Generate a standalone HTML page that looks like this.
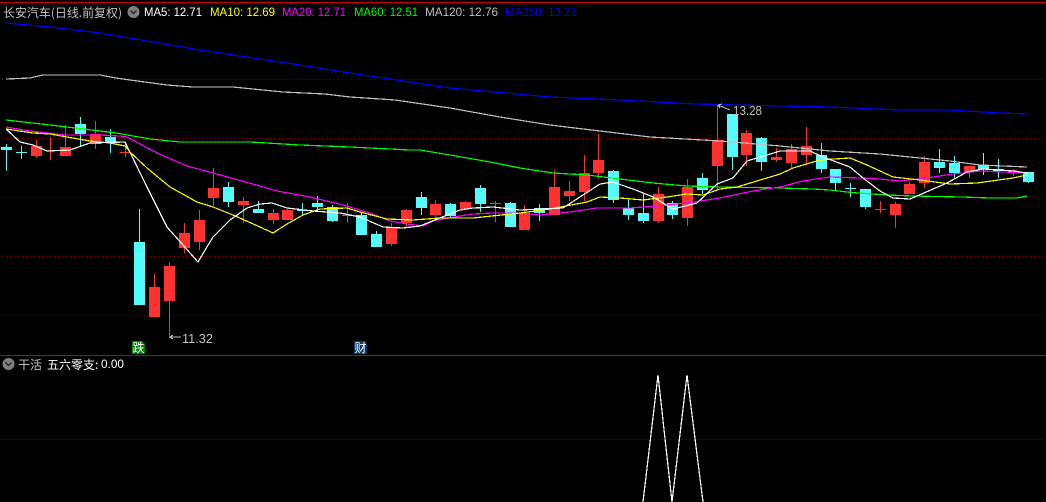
<!DOCTYPE html>
<html><head><meta charset="utf-8"><style>
html,body{margin:0;padding:0;background:#000;width:1046px;height:502px;overflow:hidden}
svg{display:block}
text{font-family:"Liberation Sans","WenQuanYi Zen Hei","Noto Sans CJK SC",sans-serif;font-size:12px}
.cn{font-family:"WenQuanYi Zen Hei","Noto Sans CJK SC",sans-serif}
</style></head><body>
<svg width="1046" height="502" viewBox="0 0 1046 502" xmlns="http://www.w3.org/2000/svg">
<defs><pattern id="d" x="2" y="0" width="4" height="1" patternUnits="userSpaceOnUse"><rect width="1" height="1" fill="#800000"/></pattern></defs>
<rect width="1046" height="502" fill="#000"/>
<g shape-rendering="crispEdges">
<rect x="0" y="2" width="1046" height="1" fill="#c80000"/>
<rect x="0" y="355" width="1046" height="1" fill="#c80000"/>
<rect x="2" y="79" width="1044" height="1" fill="url(#d)"/>
<rect x="2" y="138" width="1044" height="1" fill="url(#d)"/>
<rect x="2" y="197" width="1044" height="1" fill="url(#d)"/>
<rect x="2" y="256" width="1044" height="1" fill="url(#d)"/>
<rect x="2" y="315" width="1044" height="1" fill="url(#d)"/>
<rect x="2" y="439" width="1044" height="1" fill="url(#d)"/>
<path fill="#54fcfc" d="M1 147h11v3h-11zM6 144h1v27h-1zM16 152h11v1h-11zM21 146h1v13h-1zM75 124h11v10h-11zM80 117h1v30h-1zM105 137h11v5h-11zM110 129h1v24h-1zM134 242h11v63h-11zM139 209h1v33h-1zM223 187h11v15h-11zM228 182h1v25h-1zM253 209h11v4h-11zM258 201h1v12h-1zM297 210h10v1h-10zM302 203h1v13h-1zM312 203h11v4h-11zM317 196h1v16h-1zM327 207h11v14h-11zM332 205h1v17h-1zM356 215h11v20h-11zM361 213h1v22h-1zM371 234h11v13h-11zM376 231h1v16h-1zM416 197h11v11h-11zM421 192h1v23h-1zM445 204h11v12h-11zM450 203h1v14h-1zM475 188h11v16h-11zM480 185h1v27h-1zM505 203h11v24h-11zM510 202h1v25h-1zM534 208h11v5h-11zM539 204h1v17h-1zM608 171h11v29h-11zM613 170h1v33h-1zM623 208h11v7h-11zM628 200h1v20h-1zM638 213h11v8h-11zM643 194h1v29h-1zM667 203h11v12h-11zM672 201h1v18h-1zM697 178h11v12h-11zM702 173h1v21h-1zM727 114h11v43h-11zM732 114h1v56h-1zM756 138h11v24h-11zM761 137h1v34h-1zM816 155h11v14h-11zM821 143h1v30h-1zM830 169h11v14h-11zM835 169h1v21h-1zM845 188h11v1h-11zM850 183h1v14h-1zM860 189h11v18h-11zM865 189h1v20h-1zM934 162h11v6h-11zM939 149h1v24h-1zM949 163h11v10h-11zM954 156h1v22h-1zM978 165h11v4h-11zM983 153h1v22h-1zM993 169h11v2h-11zM998 159h1v19h-1zM1023 172h11v10h-11zM1028 172h1v11h-1z"/>
<path fill="#ff3232" d="M31 146h11v10h-11zM36 140h1v18h-1zM45 150h11v1h-11zM50 137h1v23h-1zM60 147h11v9h-11zM65 125h1v31h-1zM90 134h11v10h-11zM95 121h1v28h-1zM120 152h11v1h-11zM125 142h1v15h-1zM149 287h11v30h-11zM154 274h1v43h-1zM164 266h11v35h-11zM169 262h1v76h-1zM179 233h11v15h-11zM184 223h1v30h-1zM194 220h11v22h-11zM199 210h1v40h-1zM208 188h11v10h-11zM213 168h1v38h-1zM238 201h11v4h-11zM243 197h1v26h-1zM268 213h11v7h-11zM273 209h1v15h-1zM282 210h11v10h-11zM287 209h1v11h-1zM342 215h10v1h-10zM347 203h1v20h-1zM386 228h11v16h-11zM391 223h1v23h-1zM401 210h11v13h-11zM406 209h1v18h-1zM430 204h11v11h-11zM435 200h1v17h-1zM460 202h11v7h-11zM465 201h1v8h-1zM490 203h11v1h-11zM495 201h1v21h-1zM519 213h11v17h-11zM524 205h1v25h-1zM549 187h11v28h-11zM554 170h1v45h-1zM564 191h11v5h-11zM569 181h1v20h-1zM579 173h11v19h-11zM584 155h1v46h-1zM593 160h11v13h-11zM598 134h1v45h-1zM653 194h11v27h-11zM658 187h1v36h-1zM682 187h11v31h-11zM687 179h1v47h-1zM712 140h11v26h-11zM717 104h1v86h-1zM741 133h11v22h-11zM746 130h1v36h-1zM771 157h11v3h-11zM776 148h1v14h-1zM786 149h11v14h-11zM791 144h1v25h-1zM801 146h11v9h-11zM806 127h1v38h-1zM875 209h11v1h-11zM880 201h1v12h-1zM890 204h11v11h-11zM895 202h1v26h-1zM904 184h11v10h-11zM909 182h1v12h-1zM919 162h11v21h-11zM924 156h1v32h-1zM964 166h11v6h-11zM969 166h1v12h-1zM1006 170h11v1h-11zM1013 169h1v7h-1z"/>
<g fill="none" stroke-width="1.2">
<polyline stroke="#0000ff" points="6,23 50,27 100,33 200,50 300,65 350,73 450,88 550,97 620,100 695,104 780,106 830,107 900,110 950,110 1000,113 1028,114"/>
<polyline stroke="#c0c0c0" points="6,79 30,78 43,75 100,75 116,78 130,80 167,85 193,87 233,87 283,92 325,94 350,97 395,100 450,108 500,117 550,125 600,131 650,137 720,141 780,146 830,151 880,154 950,161 980,165 1027,167"/>
<polyline stroke="#00ff00" points="6,120 50,125 100,131 116,133 150,139 180,142 250,142 300,145 350,147 410,150 420,150 450,155 490,162 520,168 553,173 587,175 620,179 653,183 687,186 720,187 780,188 813,189 830,190 847,192 858,193 887,195 913,196 962,197 990,198 1017,198 1027,196"/>
<polyline stroke="#ff00ff" points="6,127 30,131 65,135 100,135 120,136 127,137 157,153 187,166 213,173 260,186 277,191 310,197 343,205 370,213 390,221 407,224 423,226 433,221 460,216 473,214 493,213 520,213 540,215 570,212 597,208 630,208 657,206 687,203 720,198 753,191 780,187 803,181 830,177 860,178 880,179 900,181 927,178 953,174 980,171 1027,173"/>
<polyline stroke="#ffff00" points="6,129 33,133 50,134 67,137 90,141 110,143 125,146 130,152 147,168 170,187 197,202 213,207 233,215 260,227 273,233 287,224 303,215 320,209 347,208 360,212 387,219 413,220 440,218 473,218 520,213 550,209 587,202 600,197 620,198 643,200 667,197 687,194 703,195 720,189 737,187 780,174 793,168 820,160 850,158 867,165 893,177 920,180 950,184 977,183 1013,178 1027,175"/>
<polyline stroke="#ffffff" points="6,129 20,142 33,145 47,151 70,150 90,143 125,142 147,187 167,227 198,262 213,237 230,220 247,208 260,204 272,203 287,208 313,211 340,213 360,217 383,227 403,228 420,226 440,218 460,210 473,208 493,207 520,210 563,208 583,195 600,184 613,182 633,189 653,197 673,209 697,203 717,184 733,178 747,161 767,155 780,151 810,151 823,157 850,167 863,178 880,191 893,198 910,199 947,183 967,172 983,169 1013,171 1027,173"/>
<polyline stroke="#ffffff" points="643,502 658,375 672,502 687,375 703,502"/>
</g>
<g fill="none" stroke="#c0c0c0" stroke-width="1">
<path d="M170 337H181M170 337l3 -2M170 337l3 2"/>
<path d="M718 105L730 110M718 105l4 -1M718 105l2 3"/>
</g>
<path fill="#008000" d="M132 341h10l3 3v10h-13z"/>
<path fill="#0a3a6a" d="M354 341h10l3 3v10h-13z"/>
</g>
<circle cx="133.5" cy="12" r="6" fill="#808080"/>
<path d="M130.5 10.5l3 3 3-3" fill="none" stroke="#222" stroke-width="1.3"/>
<circle cx="8.5" cy="364" r="6" fill="#808080"/>
<path d="M5.5 362.5l3 3 3-3" fill="none" stroke="#222" stroke-width="1.3"/>
<text class="cn" x="3" y="17" fill="#c0c0c0" textLength="119" lengthAdjust="spacingAndGlyphs" style="font-size:12px">长安汽车(日线.前复权)</text>
<text x="144" y="16" fill="#ffffff" textLength="58" lengthAdjust="spacingAndGlyphs">MA5: 12.71</text>
<text x="210" y="16" fill="#ffff00" textLength="65" lengthAdjust="spacingAndGlyphs">MA10: 12.69</text>
<text x="282" y="16" fill="#ff00ff" textLength="64" lengthAdjust="spacingAndGlyphs">MA20: 12.71</text>
<text x="354" y="16" fill="#00ff00" textLength="64" lengthAdjust="spacingAndGlyphs">MA60: 12.51</text>
<text x="425" y="16" fill="#c0c0c0" textLength="73" lengthAdjust="spacingAndGlyphs">MA120: 12.76</text>
<text x="505" y="16" fill="#0000ff" textLength="72" lengthAdjust="spacingAndGlyphs">MA250: 13.21</text>
<text class="cn" x="18" y="369" fill="#c0c0c0" style="font-size:12px">干活</text>
<text class="cn" x="47" y="369" fill="#ffffff" style="font-size:12px">五六零支:</text>
<text x="101" y="368" fill="#ffffff" textLength="23" lengthAdjust="spacingAndGlyphs">0.00</text>
<text x="182" y="343" fill="#c0c0c0" textLength="31" lengthAdjust="spacingAndGlyphs" style="font-size:13px">11.32</text>
<text x="733" y="115" fill="#c0c0c0" textLength="29" lengthAdjust="spacingAndGlyphs" style="font-size:13px">13.28</text>
<text class="cn" x="132.5" y="352" fill="#ffffff" style="font-size:12px">跌</text>
<text class="cn" x="354.5" y="352" fill="#ffffff" style="font-size:12px">财</text>
</svg>
</body></html>
